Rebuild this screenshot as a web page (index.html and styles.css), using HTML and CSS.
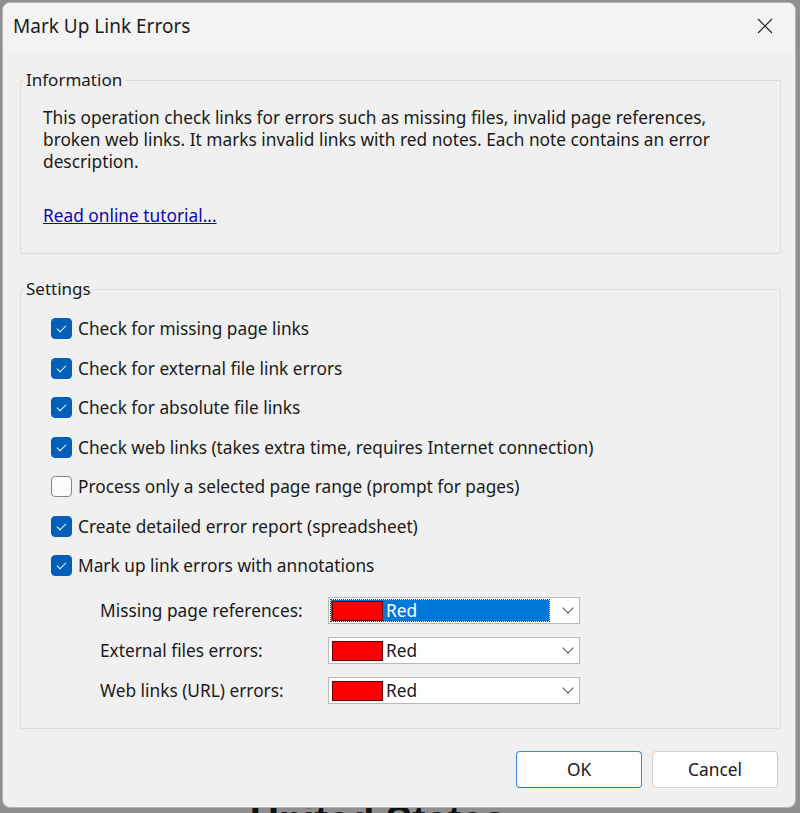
FILE: index.html
```html
<!DOCTYPE html>
<html>
<head lang="en">
    <meta charset="UTF-8">
    <title>Mark Up Link Errors</title>
    <link rel="stylesheet" href="styles.css">
</head>
<body>
<div class="behind">United States</div>
<div class="dialog">
    <div class="titlebar">
        <span class="title">Mark Up Link Errors</span>
        <svg class="close" width="16" height="16" viewBox="0 0 16 16">
            <path d="M1 1L15 15M15 1L1 15" stroke="#222" stroke-width="1.2" fill="none"/>
        </svg>
    </div>
    <div class="body">
        <fieldset class="group info">
            <legend>Information</legend>
            <p>This operation check links for errors such as missing files, invalid page references, broken web links. It marks invalid links with red notes. Each note contains an error description.</p>
            <a href="#" class="link">Read online tutorial...</a>
        </fieldset>

        <fieldset class="group settings">
            <legend>Settings</legend>
            <label class="check"><span class="box on"></span>Check for missing page links</label>
            <label class="check"><span class="box on"></span>Check for external file link errors</label>
            <label class="check"><span class="box on"></span>Check for absolute file links</label>
            <label class="check"><span class="box on"></span>Check web links (takes extra time, requires Internet connection)</label>
            <label class="check"><span class="box"></span>Process only a selected page range (prompt for pages)</label>
            <label class="check"><span class="box on"></span>Create detailed error report (spreadsheet)</label>
            <label class="check"><span class="box on"></span>Mark up link errors with annotations</label>

            <div class="colors">
                <div class="row">
                    <span class="lbl">Missing page references:</span>
                    <div class="combo focus">
                        <div class="value"><span class="swatch"></span><span>Red</span></div>
                        <span class="arrow"></span>
                    </div>
                </div>
                <div class="row">
                    <span class="lbl">External files errors:</span>
                    <div class="combo">
                        <div class="value"><span class="swatch"></span><span>Red</span></div>
                        <span class="arrow"></span>
                    </div>
                </div>
                <div class="row">
                    <span class="lbl">Web links (URL) errors:</span>
                    <div class="combo">
                        <div class="value"><span class="swatch"></span><span>Red</span></div>
                        <span class="arrow"></span>
                    </div>
                </div>
            </div>
        </fieldset>

        <div class="buttons">
            <button class="btn default">OK</button>
            <button class="btn">Cancel</button>
        </div>
    </div>
</div>
</body>
</html>
```

FILE: styles.css
```css
*{
    margin:0;
    padding:0;
    box-sizing: border-box;
}
html,body{
    height: 100%;
}
body{
    background: #8f8f8f;
    font-family: "Noto Sans", "Open Sans", sans-serif;
    font-size: 17.3px;
    color: #1a1a1a;
    overflow: hidden;
    position: relative;
}
.behind{
    position: absolute;
    left: 250px;
    top: 798px;
    font: bold 40px "Liberation Sans", sans-serif;
    color: #111;
}
.dialog{
    position: relative;
    margin: 2px 0 0 2px;
    width: 794px;
    height: 806px;
    background: #f0f0f0;
    border: 1px solid #b5b5b5;
    border-radius: 8px;
    overflow: hidden;
}
.titlebar{
    height: 48px;
    background: #f3f3f3;
    display: flex;
    align-items: center;
    justify-content: space-between;
    padding: 0 22px 0 10px;
}
.title{
    font-size: 19px;
    color: #1b1b1b;
    position: relative;
    top: -1px;
}
.close{
    position: relative;
    top: -1px;
}
.body{
    padding: 18px 14px 0 17px;
}
.group{
    border: 1px solid #dddddd;
    border-radius: 2px;
    padding: 0 0 0 22px;
}
.group legend{
    margin-left: -19px;
    padding: 0 2px;
    font-size: 17px;
    line-height: 22px;
}
.info{
    height: 185px;
    padding-top: 16px;
}
.info p{
    width: 705px;
    line-height: 22px;
}
.link{
    display: inline-block;
    margin-top: 32px;
    color: #0a0aa8;
    line-height: 22px;
}
.settings{
    margin-top: 24px;
    height: 451px;
    padding-left: 30px;
    padding-top: 9px;
}
.settings legend{
    margin-left: -27px;
}
.check{
    display: flex;
    align-items: center;
    height: 39.5px;
}
.box{
    width: 21px;
    height: 21px;
    border-radius: 4px;
    border: 1px solid #868686;
    background: #fbfbfb;
    margin-right: 6px;
    flex-shrink: 0;
    display: flex;
    align-items: center;
    justify-content: center;
}
.box.on{
    background: #005fb8;
    border-color: #005fb8;
}
.box.on::after{
    content: "";
    width: 8px;
    height: 4px;
    border-left: 1.3px solid #fff;
    border-bottom: 1.3px solid #fff;
    transform: rotate(-45deg);
    margin-top: -2px;
}
.colors{
    margin-top: 5px;
    padding-left: 49px;
}
.row{
    display: flex;
    align-items: center;
    height: 40px;
}
.lbl{
    width: 228px;
}
.combo{
    width: 252px;
    height: 27px;
    background: #fff;
    border: 1px solid #b9b9b9;
    display: flex;
    align-items: center;
    padding: 2px;
}
.value{
    display: flex;
    align-items: center;
    height: 100%;
    width: 218px;
}
.focus .value{
    background: #0078d7;
    color: #fff;
    outline: 1px dotted #333;
}
.swatch{
    width: 51px;
    height: 20px;
    background: #ff0000;
    border: 1px solid #6a0000;
    margin: 0 3px 0 1px;
}
.arrow{
    margin-left: 15px;
    width: 8px;
    height: 8px;
    border-right: 1.2px solid #555;
    border-bottom: 1.2px solid #555;
    transform: rotate(45deg);
    margin-top: -5px;
}
.buttons{
    display: flex;
    justify-content: flex-end;
    gap: 10px;
    margin-top: 22px;
    padding-right: 3px;
}
.btn{
    width: 126px;
    height: 37px;
    background: #fdfdfd;
    border: 1px solid #d0d0d0;
    border-radius: 4px;
    font-family: inherit;
    font-size: 17.3px;
    color: #1a1a1a;
}
.btn.default{
    border-color: #3a8be0;
    border-bottom-color: #2e73c0;
}
```
